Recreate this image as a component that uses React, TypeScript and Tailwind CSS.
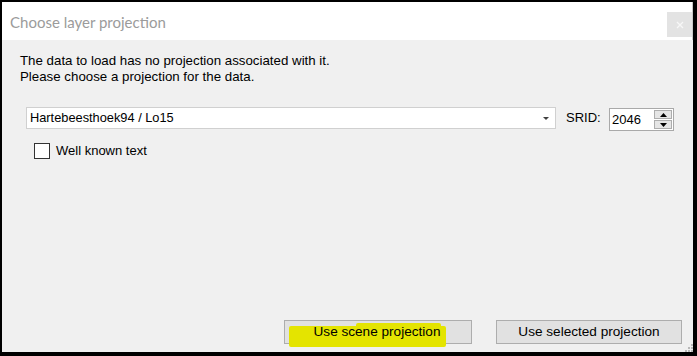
import React from "react";

const ui = { fontFamily: '"Liberation Sans", Arial, sans-serif' };

function SizeGrip() {
    const dots = [
        [6, 0], [6, 3], [3, 3], [6, 6], [3, 6], [0, 6],
    ];
    return (
        <svg width="8" height="8" viewBox="0 0 8 8" className="absolute right-0 bottom-0">
            {dots.map(([x, y], i) => (
                <rect key={i} x={x} y={y} width="2" height="2" fill="#b8b8b8" />
            ))}
        </svg>
    );
}

function Spinner() {
    return (
        <div className="w-[65px] h-[23px] mt-[1px] bg-white border border-[#a9a9a9] flex items-center justify-between pl-[2px] pr-[1px]">
            <span className="text-[13px] text-black leading-none">2046</span>
            <div className="flex flex-col w-[18px] h-[19px] gap-[1px]">
                <div className="flex-1 bg-[#e5e5e5] border border-[#adadad] flex items-center justify-center">
                    <svg width="7" height="4" viewBox="0 0 7 4"><path d="M3.5 0L7 4H0z" fill="#000" /></svg>
                </div>
                <div className="flex-1 bg-[#e5e5e5] border border-[#adadad] flex items-center justify-center">
                    <svg width="7" height="4" viewBox="0 0 7 4"><path d="M0 0h7L3.5 4z" fill="#000" /></svg>
                </div>
            </div>
        </div>
    );
}

export default function App() {
    return (
        <div className="w-[697px] h-[356px] bg-black pt-[2px] pl-[2px] overflow-hidden" style={ui}>
            <div className="w-[691px] h-[350px] flex flex-col relative">
                {/* Title bar */}
                <div className="h-[38px] bg-white flex items-start justify-between border-r border-[#c8c8c8]">
                    <span
                        className="mt-[9px] ml-[8px] text-[15px] text-[#9b9b9b]"
                        style={{ fontFamily: 'Lato, "Noto Sans", sans-serif' }}
                    >
                        Choose layer projection
                    </span>
                    <div className="mt-[10px] w-[25px] h-[25px] bg-[#e3e3e3] flex items-center justify-center">
                        <svg width="8" height="8" viewBox="0 0 8 8">
                            <path d="M1 1l6 6M7 1L1 7" stroke="#f7f7f7" strokeWidth="1.3" />
                        </svg>
                    </div>
                </div>

                {/* Body */}
                <div className="flex-1 bg-[#f0f0f0] flex flex-col text-[13px] text-black">
                    <div className="pl-[18px] pt-[13px] leading-[16px] text-[13.3px]">
                        <p>The data to load has no projection associated with it.</p>
                        <p>Please choose a projection for the data.</p>
                    </div>

                    <div className="flex items-start pl-[24px] mt-[22px] h-[24px]">
                        <div className="w-[530px] h-[22px] bg-white border border-[#d0d0d0] flex items-center justify-between pl-[3px] pr-[6px]">
                            <span className="text-[12.8px]">Hartebeesthoek94 / Lo15</span>
                            <svg width="6" height="3" viewBox="0 0 6 3"><path d="M0 0h6L3 3z" fill="#404040" /></svg>
                        </div>
                        <span className="ml-[10px] mt-[3px] w-[43px] leading-[16px]">SRID:</span>
                        <Spinner />
                    </div>

                    <label className="flex items-center gap-[6px] pl-[32px] mt-[12px] h-[16px]">
                        <span className="w-[16px] h-[16px] bg-white border-[1.5px] border-[#333]" />
                        <span className="leading-[16px]">Well known text</span>
                    </label>

                    <div className="mt-auto mb-[8px] flex justify-end gap-[24px] pr-[11px]">
                        <button className="relative w-[188px] h-[24px] bg-[#e1e1e1] border border-[#adadad] text-[13.6px]">
                            <span className="absolute left-[4px] top-[5px] w-[157px] h-[21px] bg-[#e4e400] rounded-[2px]" />
                            <span className="absolute left-[71px] top-[2px] w-[85px] h-[19px] bg-[#e4e400] rounded-[2px]" />
                            <span className="absolute left-[56px] top-[20px] w-[30px] h-[6px] bg-[#e4e400]" />
                            <span className="relative pr-[2px]">Use scene projection</span>
                        </button>
                        <button className="w-[186px] h-[24px] bg-[#e1e1e1] border border-[#adadad] text-[13.6px]">
                            Use selected projection
                        </button>
                    </div>
                </div>
                <SizeGrip />
            </div>
        </div>
    );
}
